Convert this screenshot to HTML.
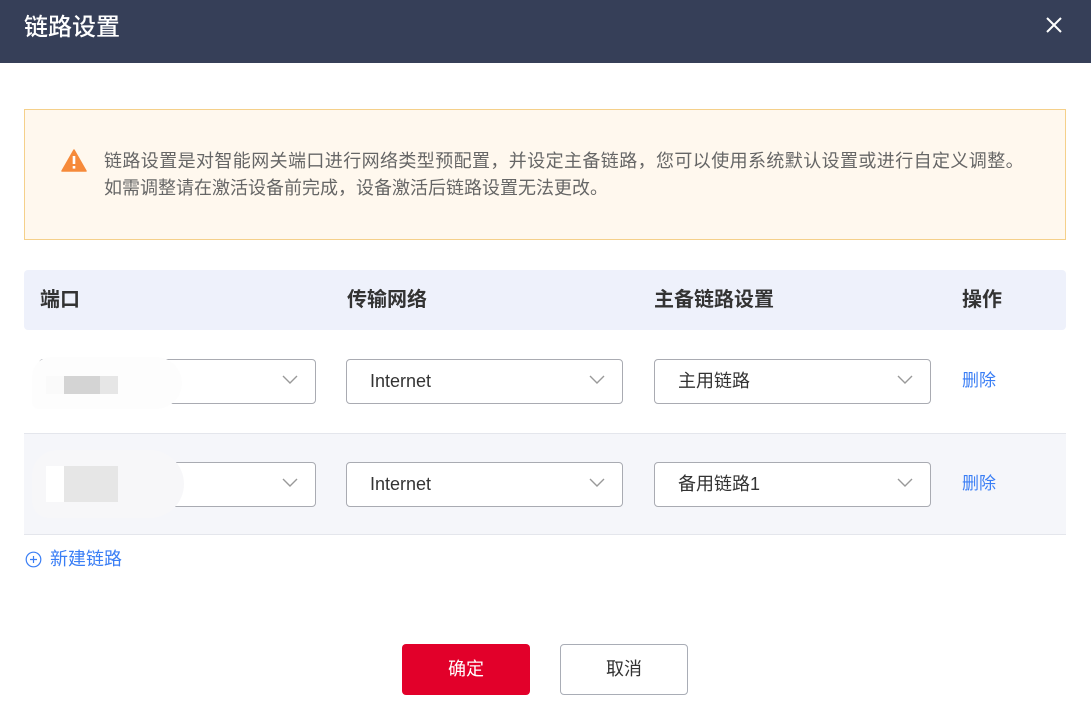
<!DOCTYPE html>
<html><head><meta charset="utf-8"><style>
*{margin:0;padding:0;box-sizing:border-box}
body{width:1091px;height:711px;background:#fff;font-family:"Liberation Sans","Noto Sans CJK SC",sans-serif;position:relative;overflow:hidden;color:#333}
.abs{position:absolute}
.hdr{left:0;top:0;width:1091px;height:63px;background:#363f58}
.title{left:24px;top:13px;font-size:24px;color:#fff;line-height:30px;font-weight:500}
.alert{left:24px;top:109px;width:1042px;height:131px;background:#fff8ee;border:1px solid #f5d08a}
.at{left:104px;font-size:18px;color:#666;line-height:22px;white-space:nowrap}
.th{left:24px;top:270px;width:1042px;height:60px;background:#eef1fb;border-radius:4px}
.hc{top:287px;font-size:20px;font-weight:bold;color:#333;line-height:26px}
.row2{left:24px;top:433px;width:1042px;height:102px;background:#f5f6fa;border-top:1px solid #e4e6ec;border-bottom:1px solid #e4e6ec}
.sel{width:277px;height:45px;border:1px solid #a9abb2;border-radius:4px;background:#fff}
.sel span{position:absolute;left:23px;top:10px;font-size:18px;color:#333;line-height:22px}
.sel svg{position:absolute;right:17px;top:15px}
.del{font-size:17px;color:#3a7ef5;line-height:22px}
.btn{top:644px;width:128px;height:51px;border-radius:4px;font-size:18px;text-align:center;line-height:51px}
</style></head><body>
<div class="abs hdr"></div>
<div class="abs title">链路设置</div>
<svg class="abs" style="left:1046px;top:17px" width="16" height="16" viewBox="0 0 16 16"><path d="M1 1L15 15M15 1L1 15" stroke="#fff" stroke-width="2"/></svg>
<div class="abs alert"></div>
<svg class="abs" style="left:61px;top:149px" width="26" height="23" viewBox="0 0 26 23"><path d="M13 1L25 22H1Z" fill="#f68a3a" stroke="#f68a3a" stroke-linejoin="round" stroke-width="1.5"/><rect x="11.7" y="7" width="2.6" height="8" fill="#fff"/><rect x="11.7" y="17" width="2.6" height="2.6" fill="#fff"/></svg>
<div class="abs at" style="top:150px;letter-spacing:0.4px">链路设置是对智能网关端口进行网络类型预配置，并设定主备链路，您可以使用系统默认设置或进行自定义调整。</div>
<div class="abs at" style="top:177px">如需调整请在激活设备前完成，设备激活后链路设置无法更改。</div>
<div class="abs th"></div>
<div class="abs hc" style="left:40px">端口</div>
<div class="abs hc" style="left:347px">传输网络</div>
<div class="abs hc" style="left:654px">主备链路设置</div>
<div class="abs hc" style="left:962px">操作</div>
<div class="abs row2"></div>

<div class="abs sel" style="left:39px;top:359px"><svg width="16" height="10" viewBox="0 0 16 10"><path d="M1 1L8 8L15 1" fill="none" stroke="#999" stroke-width="1.4"/></svg></div>
<div class="abs" style="left:32px;top:357px;width:150px;height:52px;background:#fdfdfd;border-radius:30px 40px 40px 10px"></div>
<div class="abs" style="left:46px;top:376px;width:18px;height:18px;background:#fafafa"></div>
<div class="abs" style="left:64px;top:376px;width:36px;height:18px;background:#d4d4d4"></div>
<div class="abs" style="left:100px;top:376px;width:18px;height:18px;background:#e6e6e6"></div>
<div class="abs sel" style="left:346px;top:359px"><span>Internet</span><svg width="16" height="10" viewBox="0 0 16 10"><path d="M1 1L8 8L15 1" fill="none" stroke="#999" stroke-width="1.4"/></svg></div>
<div class="abs sel" style="left:654px;top:359px"><span>主用链路</span><svg width="16" height="10" viewBox="0 0 16 10"><path d="M1 1L8 8L15 1" fill="none" stroke="#999" stroke-width="1.4"/></svg></div>
<div class="abs del" style="left:962px;top:370px">删除</div>

<div class="abs sel" style="left:39px;top:462px"><svg width="16" height="10" viewBox="0 0 16 10"><path d="M1 1L8 8L15 1" fill="none" stroke="#999" stroke-width="1.4"/></svg></div>
<div class="abs" style="left:32px;top:450px;width:152px;height:68px;background:#f7f7f9;border-radius:30px 40px 40px 20px"></div>
<div class="abs" style="left:46px;top:466px;width:72px;height:36px;background:#fff"></div>
<div class="abs" style="left:64px;top:466px;width:54px;height:36px;background:#e6e6e6"></div>
<div class="abs sel" style="left:346px;top:462px"><span>Internet</span><svg width="16" height="10" viewBox="0 0 16 10"><path d="M1 1L8 8L15 1" fill="none" stroke="#999" stroke-width="1.4"/></svg></div>
<div class="abs sel" style="left:654px;top:462px"><span>备用链路1</span><svg width="16" height="10" viewBox="0 0 16 10"><path d="M1 1L8 8L15 1" fill="none" stroke="#999" stroke-width="1.4"/></svg></div>
<div class="abs del" style="left:962px;top:473px">删除</div>

<svg class="abs" style="left:25px;top:551px" width="17" height="17" viewBox="0 0 17 17"><circle cx="8.5" cy="8.5" r="7.3" fill="none" stroke="#3a7ef5" stroke-width="1.2"/><path d="M8.5 5V12M5 8.5H12" stroke="#3a7ef5" stroke-width="1.2"/></svg>
<div class="abs del" style="left:50px;top:548px;font-size:18px">新建链路</div>

<div class="abs btn" style="left:402px;background:#e2002a;color:#fff">确定</div>
<div class="abs btn" style="left:560px;border:1px solid #a9adb6;color:#333;line-height:49px">取消</div>
</body></html>
